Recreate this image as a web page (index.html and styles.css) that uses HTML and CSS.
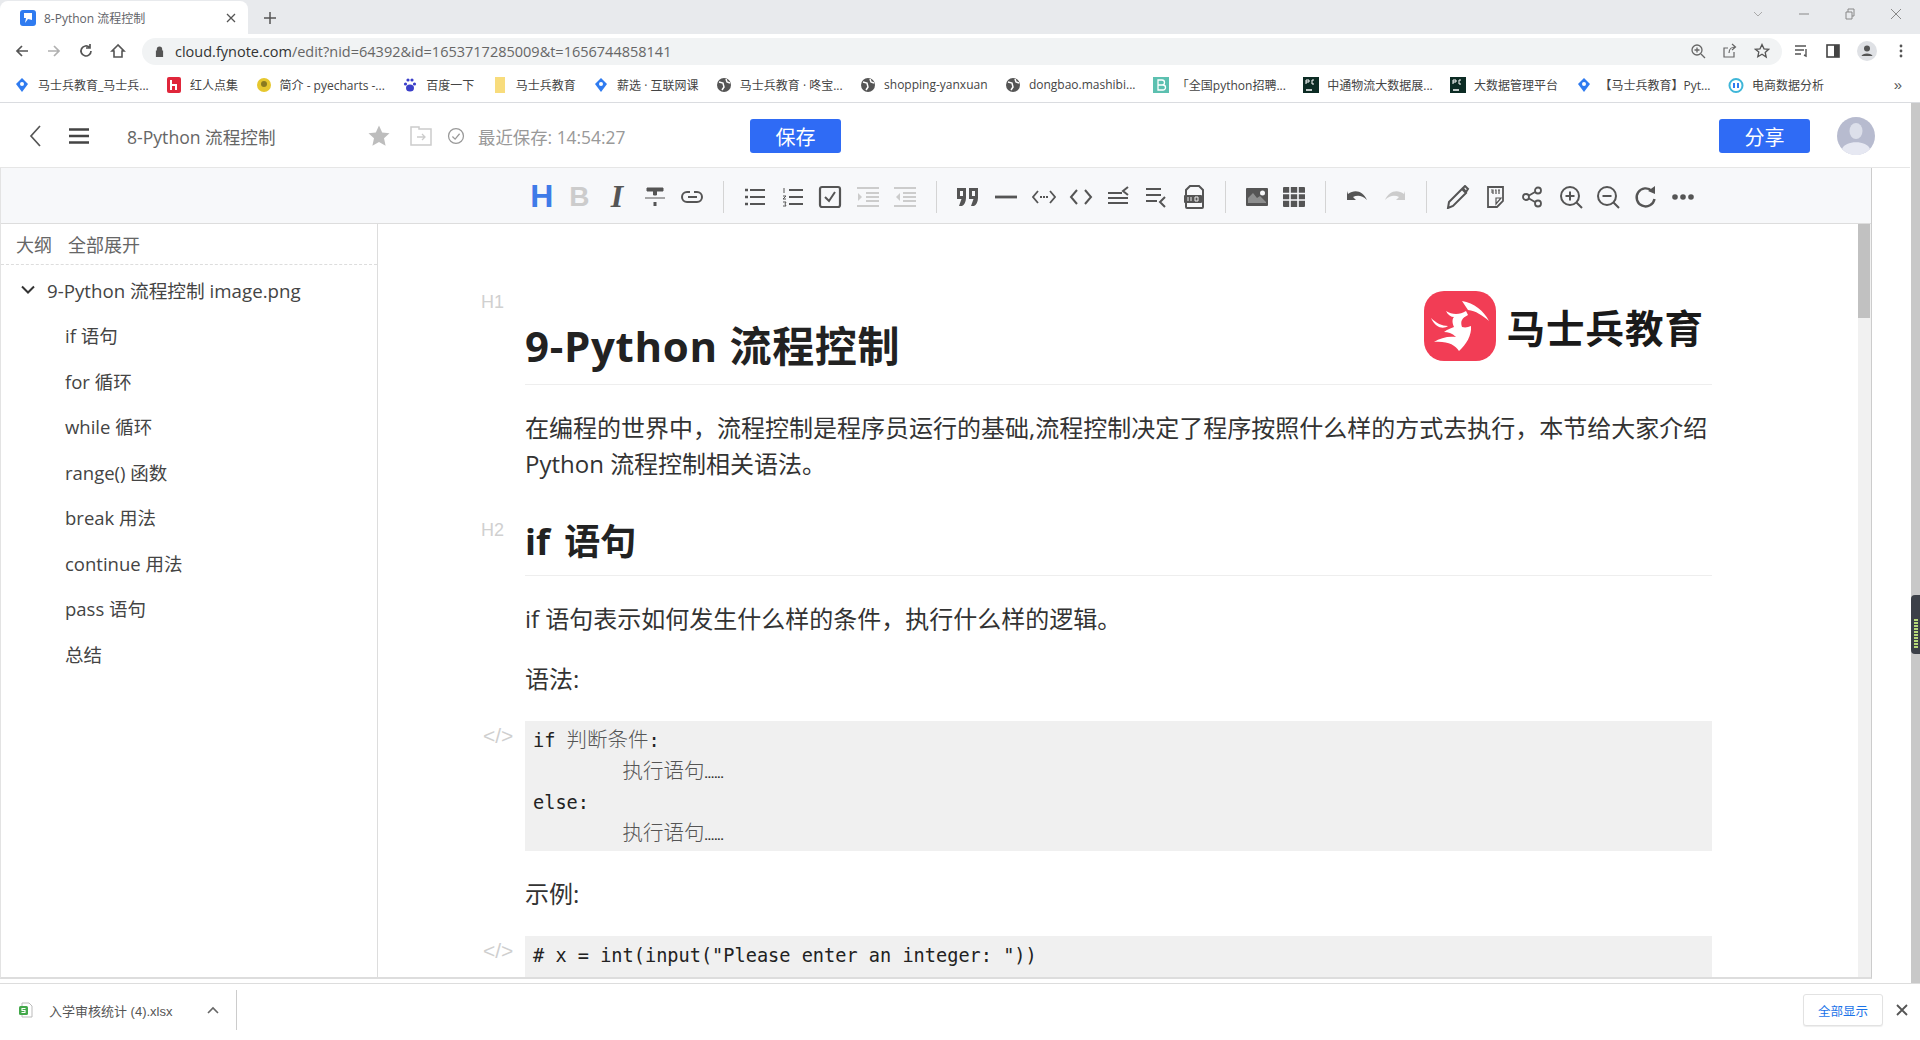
FILE: index.html
```html
<!DOCTYPE html>
<html lang="zh-CN">
<head>
<meta charset="utf-8">
<title>8-Python 流程控制</title>
<link rel="stylesheet" href="styles.css">
</head>
<body>
<div class="screen">
  <div class="tabstrip">
    <div class="tab">
      <svg class="fav" viewBox="0 0 16 16"><rect width="16" height="16" rx="3" fill="#2f7bf0"/><path d="M4 3h8v7l-4-1-3 4 1-5H4z" fill="#fff"/></svg>
      <span class="tab-title">8-Python 流程控制</span>
      <svg class="tab-x" viewBox="0 0 10 10"><path d="M1 1l8 8M9 1l-8 8" stroke="#555" stroke-width="1.3"/></svg>
    </div>
    <svg class="tab-new" viewBox="0 0 12 12"><path d="M6 0v12M0 6h12" stroke="#555" stroke-width="1.5"/></svg>
    <div class="win-btns">
      <svg viewBox="0 0 12 12"><path d="M2 4l4 4 4-4" fill="none" stroke="#aaa"/></svg>
      <svg viewBox="0 0 12 12"><path d="M1 6h10" stroke="#888"/></svg>
      <svg viewBox="0 0 12 12"><path d="M2 4h6v7H2zM4 4V1h6v7H8" fill="none" stroke="#888"/></svg>
      <svg viewBox="0 0 12 12"><path d="M1 1l10 10M11 1L1 11" stroke="#888"/></svg>
    </div>
  </div>
  <div class="navbar">
    <svg class="nav-ic" viewBox="0 0 16 16"><path d="M14 8H3M8 3L3 8l5 5" fill="none" stroke="#555" stroke-width="1.7"/></svg>
    <svg class="nav-ic" viewBox="0 0 16 16"><path d="M2 8h11M8 3l5 5-5 5" fill="none" stroke="#b0b0b0" stroke-width="1.7"/></svg>
    <svg class="nav-ic" viewBox="0 0 16 16"><path d="M13 8a5 5 0 1 1-1.5-3.6M12 1v4H8" fill="none" stroke="#555" stroke-width="1.7"/></svg>
    <svg class="nav-ic" viewBox="0 0 16 16"><path d="M8 2L2 8h2v6h8V8h2z" fill="none" stroke="#555" stroke-width="1.6"/></svg>
    <div class="omnibox">
      <svg class="lock" viewBox="0 0 10 12"><path d="M2 5V3.500a3 3 0 0 1 6 0V5h1v7H1V5z" fill="#555"/></svg>
      <span class="url"><span class="url-host">cloud.fynote.com</span>/edit?nid=64392&amp;id=1653717285009&amp;t=1656744858141</span>
      <svg class="omni-ic" viewBox="0 0 16 16"><circle cx="7" cy="7" r="5" fill="none" stroke="#666" stroke-width="1.3"/><path d="M11 11l4 4M7 4.500v5M4.500 7h5" stroke="#666" stroke-width="1.3"/></svg>
      <svg class="omni-ic" viewBox="0 0 16 16"><path d="M12 9v5H2V5h4M7 10c0-4 3-6 6-6M10 1l3.500 3L10 7" fill="none" stroke="#666" stroke-width="1.2"/></svg>
      <svg class="omni-ic" viewBox="0 0 16 16"><path d="M8 1.500l2 4.300 4.600.5-3.400 3.100 1 4.600L8 11.300l-4.200 2.400 1-4.600L1.400 6.300 6 5.800z" fill="none" stroke="#555" stroke-width="1.3"/></svg>
    </div>
    <div class="nav-right">
      <svg class="nav-ic-s" viewBox="0 0 16 16"><path d="M2 3h11M2 7h9M2 11h6M13 6v7l-2-1" fill="none" stroke="#555" stroke-width="1.4"/></svg>
      <svg class="nav-ic-s" viewBox="0 0 16 16"><rect x="2" y="2" width="12" height="12" fill="none" stroke="#444" stroke-width="1.6"/><rect x="9" y="2" width="5" height="12" fill="#444"/></svg>
      <svg class="nav-avatar" viewBox="0 0 20 20"><circle cx="10" cy="10" r="10" fill="#dfe1e5"/><circle cx="10" cy="7.500" r="3" fill="#555"/><path d="M4.500 15c.5-3.500 10.500-3.500 11 0z" fill="#555"/></svg>
      <svg class="nav-ic-s" viewBox="0 0 16 16"><circle cx="8" cy="3" r="1.400" fill="#555"/><circle cx="8" cy="8" r="1.400" fill="#555"/><circle cx="8" cy="13" r="1.400" fill="#555"/></svg>
    </div>
  </div>
  <div class="bookmarks">
    <a class="bm"><svg viewBox="0 0 16 16"><path d="M8 1l6 6-6 8-6-8z" fill="#2f7bf0"/><circle cx="8" cy="7" r="2" fill="#fff"/></svg>马士兵教育_马士兵...</a>
    <a class="bm"><svg viewBox="0 0 16 16"><rect x="1" width="14" height="16" rx="2" fill="#e0263b"/><path d="M5 3v10M5 8h5v5" fill="none" stroke="#fff" stroke-width="2"/></svg>红人点集</a>
    <a class="bm"><svg viewBox="0 0 16 16"><circle cx="8" cy="8" r="7" fill="#e6c72e"/><circle cx="8" cy="7" r="3" fill="#8a7a20"/></svg>简介 - pyecharts -...</a>
    <a class="bm"><svg viewBox="0 0 16 16"><ellipse cx="8" cy="11" rx="4" ry="3.500" fill="#3b3fc9"/><circle cx="3.500" cy="7" r="1.600" fill="#3b3fc9"/><circle cx="12.500" cy="7" r="1.600" fill="#3b3fc9"/><circle cx="6" cy="3" r="1.600" fill="#3b3fc9"/><circle cx="10" cy="3" r="1.600" fill="#3b3fc9"/></svg>百度一下</a>
    <a class="bm"><svg viewBox="0 0 16 16"><path d="M3 0h10v16H3z" fill="#f8dc7c"/></svg>马士兵教育</a>
    <a class="bm"><svg viewBox="0 0 16 16"><path d="M8 1l6 6-6 8-6-8z" fill="#2f7bf0"/><circle cx="8" cy="7" r="2" fill="#fff"/></svg>薪选 · 互联网课</a>
    <a class="bm"><svg viewBox="0 0 16 16"><circle cx="8" cy="8" r="7" fill="#555"/><path d="M3 5l4 1 1 4-2 3M10 2l1 3 3 1" fill="none" stroke="#fff" stroke-width="1.500"/></svg>马士兵教育 · 咚宝...</a>
    <a class="bm"><svg viewBox="0 0 16 16"><circle cx="8" cy="8" r="7" fill="#555"/><path d="M3 5l4 1 1 4-2 3M10 2l1 3 3 1" fill="none" stroke="#fff" stroke-width="1.500"/></svg>shopping-yanxuan</a>
    <a class="bm"><svg viewBox="0 0 16 16"><circle cx="8" cy="8" r="7" fill="#555"/><path d="M3 5l4 1 1 4-2 3M10 2l1 3 3 1" fill="none" stroke="#fff" stroke-width="1.500"/></svg>dongbao.mashibi...</a>
    <a class="bm"><svg viewBox="0 0 16 16"><rect width="16" height="16" fill="#5cc0b0"/><path d="M5 3h4a2.500 2.500 0 0 1 0 5H5h5a2.500 2.500 0 0 1 0 5H5z" fill="none" stroke="#fff" stroke-width="1.300"/></svg>「全国python招聘...</a>
    <a class="bm"><svg viewBox="0 0 16 16"><rect width="16" height="16" fill="#0c2b24"/><path d="M3 13h6" stroke="#fff" stroke-width="1.500"/><path d="M3 7V3h3v2H3M11 3H9v4h2" fill="none" stroke="#fff"/></svg>中通物流大数据展...</a>
    <a class="bm"><svg viewBox="0 0 16 16"><rect width="16" height="16" fill="#0c2b24"/><path d="M3 13h6" stroke="#fff" stroke-width="1.500"/><path d="M3 7V3h3v2H3M11 3H9v4h2" fill="none" stroke="#fff"/></svg>大数据管理平台</a>
    <a class="bm"><svg viewBox="0 0 16 16"><path d="M8 1l6 6-6 8-6-8z" fill="#2f7bf0"/><circle cx="8" cy="7" r="2" fill="#fff"/></svg>【马士兵教育】Pyt...</a>
    <a class="bm"><svg viewBox="0 0 16 16"><circle cx="8" cy="8.500" r="6.500" fill="none" stroke="#3fb6d8" stroke-width="2"/><path d="M6 6v5M10 6v5" stroke="#2f7bf0" stroke-width="2"/></svg>电商数据分析</a>
    <span class="bm-more">»</span>
  </div>

  <div class="app">
    <div class="app-col">
      <header class="app-header">
        <svg class="hd-back" viewBox="0 0 12 22"><path d="M11 1L2 11l9 10" fill="none" stroke="#555" stroke-width="1.700"/></svg>
        <svg class="hd-menu" viewBox="0 0 20 16"><path d="M0 1.500h20M0 8h20M0 14.500h20" stroke="#444" stroke-width="2.600"/></svg>
        <span class="doc-title">8-Python 流程控制</span>
        <svg class="hd-star" viewBox="0 0 24 24"><path d="M12 1.500l3.200 7 7.300.8-5.500 5 1.600 7.500L12 18l-6.600 3.800L7 14.300l-5.500-5 7.300-.8z" fill="#bdbdbd"/></svg>
        <svg class="hd-folder" viewBox="0 0 22 20"><path d="M1 1h8v2h12v16H1z" fill="none" stroke="#ccc" stroke-width="1.500"/><path d="M7 11h8M12 8l3 3-3 3" fill="none" stroke="#ccc" stroke-width="1.300"/></svg>
        <svg class="hd-check" viewBox="0 0 20 20"><circle cx="10" cy="10" r="8.300" fill="none" stroke="#999" stroke-width="1.400"/><path d="M6 10.500l3 3 5-6" fill="none" stroke="#999" stroke-width="1.400"/></svg>
        <span class="saved">最近保存: 14:54:27</span>
        <button class="btn btn-save">保存</button>
        <button class="btn btn-share">分享</button>
        <svg class="avatar" viewBox="0 0 38 38"><circle cx="19" cy="19" r="19" fill="#b7bbcf"/><ellipse cx="19" cy="14" rx="6.500" ry="8" fill="#dcdfea"/><path d="M5 32c3-9 25-9 28 0a19 19 0 0 1-28 0z" fill="#e6e8f2"/></svg>
      </header>
      <div class="panel">
        <div class="toolbar">
          <span class="tb tb-h">H</span>
          <span class="tb tb-b">B</span>
          <span class="tb tb-i">I</span>
          <span class="tb"><svg viewBox="0 0 24 24"><path d="M4 3h16v3h-6.500v4h-3V6H4zM2 13h20" fill="#555" stroke="#555" stroke-width="1"/><rect x="10.500" y="17" width="3" height="4" fill="#555"/></svg></span>
          <span class="tb"><svg viewBox="0 0 24 24"><path d="M10 7H7a5 5 0 0 0 0 10h10a5 5 0 0 0 0-10h-3" fill="none" stroke="#555" stroke-width="2"/><path d="M8 12h9" stroke="#555" stroke-width="2"/></svg></span>
          <i class="sep"></i>
          <span class="tb"><svg viewBox="0 0 24 24"><path d="M7 5h15M7 12h15M7 19h15" stroke="#555" stroke-width="2.200"/><path d="M2 5h3M2 12h3M2 19h3" stroke="#555" stroke-width="2.600"/></svg></span>
          <span class="tb"><svg viewBox="0 0 24 24"><path d="M8 5h14M8 12h14M8 19h14" stroke="#555" stroke-width="2.200"/><path d="M3 3v5M2 11h3l-3 3h3M2 17h3l-1 2 1 2H2" fill="none" stroke="#555" stroke-width="1"/></svg></span>
          <span class="tb"><svg viewBox="0 0 24 24"><rect x="2" y="2" width="20" height="20" rx="2" fill="none" stroke="#555" stroke-width="2.200"/><path d="M7 12l4 4 6-9" fill="none" stroke="#555" stroke-width="2"/></svg></span>
          <span class="tb"><svg viewBox="0 0 24 24"><path d="M1 3h22M10 8h13M10 12h13M10 16h13M1 21h22" stroke="#ccc" stroke-width="2.200"/><path d="M2 8l4 4-4 4z" fill="#ccc"/></svg></span>
          <span class="tb"><svg viewBox="0 0 24 24"><path d="M1 3h22M10 8h13M10 12h13M10 16h13M1 21h22" stroke="#ccc" stroke-width="2.200"/><path d="M7 8l-4 4 4 4z" fill="#ccc"/></svg></span>
          <i class="sep"></i>
          <span class="tb"><svg viewBox="0 0 24 24"><path fill-rule="evenodd" d="M1 3h9v10c0 4-2 7-4 8H3l2.500-7H1zM4 6v5h3V6zM13 3h9v10c0 4-2 7-4 8h-3l2.500-7H13zM16 6v5h3V6z" fill="#555"/></svg></span>
          <span class="tb"><svg viewBox="0 0 24 24"><path d="M1 12h22" stroke="#555" stroke-width="2.800"/></svg></span>
          <span class="tb"><svg viewBox="0 0 24 24"><path d="M6 6l-5 6 5 6M18 6l5 6-5 6" fill="none" stroke="#555" stroke-width="1.800"/><path d="M8 12h2M11 12h2M14 12h2" stroke="#555" stroke-width="1.800"/></svg></span>
          <span class="tb"><svg viewBox="0 0 24 24"><path d="M8 5l-6 7 6 7M16 5l6 7-6 7" fill="none" stroke="#555" stroke-width="2"/></svg></span>
          <span class="tb"><svg viewBox="0 0 24 24"><path d="M1 8h14M1 13h20M1 18h20M21 2l-5 4 5 4" fill="none" stroke="#555" stroke-width="2"/></svg></span>
          <span class="tb"><svg viewBox="0 0 24 24"><path d="M2 4h15M2 10h15M2 16h11M21 12l-5 5 5 5" fill="none" stroke="#555" stroke-width="2"/></svg></span>
          <span class="tb"><svg viewBox="0 0 24 24"><path d="M8 1h9l4 4v17a1 1 0 0 1-1 1H5a1 1 0 0 1-1-1V5z" fill="none" stroke="#555" stroke-width="2"/><rect x="2" y="10" width="18" height="8" rx="1" fill="#555"/><path d="M6 12v4M9 12v4M13 12v4h3v-4z" fill="none" stroke="#eee"/></svg></span>
          <i class="sep"></i>
          <span class="tb"><svg viewBox="0 0 24 24"><rect x="1" y="3" width="22" height="18" rx="1" fill="#555"/><circle cx="17.500" cy="8" r="2.500" fill="#f7f8fa"/><path d="M3 13l5-5 4 5 3-2 6 6v1H3z" fill="#f7f8fa" opacity=".35"/></svg></span>
          <span class="tb"><svg viewBox="0 0 24 24"><rect x="1" y="2" width="22" height="20" rx="1" fill="#555"/><path d="M8 2v20M16 2v20M1 8.500h22M1 15h22" stroke="#f7f8fa" stroke-width="1.600"/></svg></span>
          <i class="sep"></i>
          <span class="tb"><svg viewBox="0 0 24 24"><path d="M3 9c7-5 15-3 19 6-5-5-10-5-14-3l3 3H2V6z" fill="#555"/></svg></span>
          <span class="tb"><svg viewBox="0 0 24 24"><path d="M21 9C14 4 6 6 2 15c5-5 10-5 14-3l-3 3h9V6z" fill="#ccc"/></svg></span>
          <i class="sep"></i>
          <span class="tb"><svg viewBox="0 0 24 24"><path d="M2 23l1-6L16 4l4 4L7 21zM17 3l2-2 3 3-2 3z" fill="none" stroke="#555" stroke-width="2"/></svg></span>
          <span class="tb"><svg viewBox="0 0 24 24"><path d="M5 2h15v14l-6 6H5z" fill="none" stroke="#555" stroke-width="1.800"/><path d="M8 5h2v4M12 5h1v4M15 5h2M16 5v4M8 7h2M13 13h5l-5 6z" fill="none" stroke="#555" stroke-width="1.200"/></svg></span>
          <span class="tb"><svg viewBox="0 0 24 24"><circle cx="5" cy="12" r="3" fill="none" stroke="#555" stroke-width="1.800"/><circle cx="17" cy="5.500" r="3" fill="none" stroke="#555" stroke-width="1.800"/><circle cx="17" cy="18.500" r="3" fill="none" stroke="#555" stroke-width="1.800"/><path d="M8 10.500l6-3.500M8 13.500l6 3.500" stroke="#555" stroke-width="1.800"/></svg></span>
          <span class="tb"><svg viewBox="0 0 24 24"><circle cx="11" cy="11" r="9" fill="none" stroke="#555" stroke-width="2"/><path d="M17.500 17.500l5.500 5.500M11 6.500v9M6.500 11h9" stroke="#555" stroke-width="2"/></svg></span>
          <span class="tb"><svg viewBox="0 0 24 24"><circle cx="11" cy="11" r="9" fill="none" stroke="#555" stroke-width="2"/><path d="M17.500 17.500l5.500 5.500M6.500 11h9" stroke="#555" stroke-width="2"/></svg></span>
          <span class="tb"><svg viewBox="0 0 24 24"><path d="M18 6a9 9 0 1 0 2.500 8" fill="none" stroke="#555" stroke-width="2.400"/><path d="M14 6l7-5v8z" fill="#555"/></svg></span>
          <span class="tb"><svg viewBox="0 0 24 24"><circle cx="4" cy="12" r="2.800" fill="#555"/><circle cx="12" cy="12" r="2.800" fill="#555"/><circle cx="20" cy="12" r="2.800" fill="#555"/></svg></span>
        </div>
        <div class="main">
          <aside class="sidebar">
            <div class="side-head"><span>大纲</span><span>全部展开</span></div>
            <div class="tree-root"><svg viewBox="0 0 14 10"><path d="M1 1.500l6 6 6-6" fill="none" stroke="#333" stroke-width="2"/></svg>9-Python 流程控制 image.png</div>
            <ul class="tree">
              <li>if 语句</li>
              <li>for 循环</li>
              <li>while 循环</li>
              <li>range() 函数</li>
              <li>break 用法</li>
              <li>continue 用法</li>
              <li>pass 语句</li>
              <li>总结</li>
            </ul>
          </aside>
          <div class="doc">
            <div class="row">
              <span class="gutter">H1</span>
              <div class="h1-box">
                <h1>9-Python 流程控制</h1>
                <div class="logo">
                  <svg viewBox="0 0 72 70"><rect width="72" height="70" rx="20" fill="#f23d55"/><path d="M38 10C50 12 60 20 65 30 58 24 52 20 44 19 42 16 40 13 38 10ZM22 20C28 24 36 24 42 20L44 24C38 27 36 30 38 36 42 37 44 36 47 35 48 44 42 54 35 60 31 54 24 50 10 51 16 47 24 45 32 46 28 42 24 41 20 41 24 38 28 37 30 36 28 32 28 28 30 26 27 26 24 24 22 20ZM7 27C12 32 18 35 24 35 20 38 12 38 7 27Z" fill="#fff"/></svg>
                  <span>马士兵教育</span>
                </div>
              </div>
            </div>
            <div class="row r-p1"><span class="gutter"></span><p>在编程的世界中，流程控制是程序员运行的基础,流程控制决定了程序按照什么样的方式去执行，本节给大家介绍Python 流程控制相关语法。</p></div>
            <div class="row r-h2">
              <span class="gutter">H2</span>
              <div class="h2-box"><h2>if 语句</h2></div>
            </div>
            <div class="row r-p2"><span class="gutter"></span><p>if 语句表示如何发生什么样的条件，执行什么样的逻辑。</p></div>
            <div class="row r-p3"><span class="gutter"></span><p>语法:</p></div>
            <div class="row r-code">
              <span class="gutter code-mark">&lt;/&gt;</span>
              <pre class="code">if <span class="cn">判断条件</span>:
        <span class="cn">执行语句</span><span class="dots">......</span>
else:
        <span class="cn">执行语句</span><span class="dots">......</span></pre>
            </div>
            <div class="row r-p4"><span class="gutter"></span><p>示例:</p></div>
            <div class="row r-code">
              <span class="gutter code-mark">&lt;/&gt;</span>
              <pre class="code">
# x = int(input("Please enter an integer: "))</pre>
            </div>
          </div>
          <div class="inner-scroll"><div class="inner-thumb"></div></div>
        </div>
      </div>
    </div>
    <div class="outer-scroll"><div class="side-widget"><i></i></div></div>
  </div>

  <footer class="downloads">
    <svg class="dl-icon" viewBox="0 0 16 16"><path d="M4 1h7l3 3v11H4z" fill="#fff" stroke="#bbb"/><rect x="1" y="4" width="9" height="9" rx="1.500" fill="#43a84a"/><path d="M7.500 6.500H4v2h3v2H3.500" fill="none" stroke="#fff" stroke-width="1.100"/></svg>
    <span class="dl-name">入学审核统计 (4).xlsx</span>
    <svg class="dl-caret" viewBox="0 0 12 8"><path d="M1 7l5-5 5 5" fill="none" stroke="#666" stroke-width="1.600"/></svg>
    <i class="dl-sep"></i>
    <button class="dl-all">全部显示</button>
    <svg class="dl-x" viewBox="0 0 12 12"><path d="M1 1l10 10M11 1L1 11" stroke="#555" stroke-width="1.800"/></svg>
  </footer>
</div>
</body>
</html>
```
FILE: styles.css
```css
* { box-sizing: border-box; }
html, body { margin: 0; padding: 0; height: 100%; overflow: hidden; background: #fff; }
body { font-family: "Open Sans", "Noto Sans CJK SC", sans-serif; color: #333; }
.screen { width: 1920px; height: 1040px; display: flex; flex-direction: column; overflow: hidden; }

/* browser chrome */
.tabstrip { height: 34px; background: #e8eaed; display: flex; align-items: flex-end; flex: none; }
.tab { width: 248px; height: 33px; background: #fff; border-radius: 8px 8px 0 0; display: flex; align-items: center; padding: 0 12px 0 20px; }
.fav { width: 16px; height: 16px; flex: none; }
.tab-title { font: 12px "Open Sans", "Noto Sans CJK SC", sans-serif; color: #5f6368; margin-left: 8px; flex: 1; }
.tab-x { width: 10px; height: 10px; }
.tab-new { width: 12px; height: 12px; margin: 0 0 10px 16px; }
.win-btns { margin-left: auto; display: flex; gap: 34px; padding: 0 18px 6px 0; align-self: center; }
.win-btns svg { width: 12px; height: 12px; }
.navbar { height: 34px; flex: none; display: flex; align-items: center; padding-left: 14px; background: #fff; }
.nav-ic { width: 16px; height: 16px; margin-right: 16px; }
.omnibox { width: 1640px; margin-left: 0; height: 27px; background: #f1f3f4; border-radius: 14px; display: flex; align-items: center; padding: 0 12px; }
.lock { width: 9px; height: 11px; margin-left: 1px; }
.url { font: 14.500px "Open Sans", sans-serif; color: #666; margin-left: 11px; flex: 1; white-space: nowrap; }
.url-host { color: #333; }
.omni-ic { width: 16px; height: 16px; margin-left: 16px; }
.nav-right { display: flex; align-items: center; gap: 16px; margin-left: 11px; }
.nav-ic-s { width: 16px; height: 16px; }
.nav-avatar { width: 20px; height: 20px; }
.bookmarks { height: 35px; flex: none; display: flex; align-items: center; padding: 0 0 1px 14px; gap: 17.400px; border-bottom: 1px solid #dadce0; background: #fff; position: relative; white-space: nowrap; }
.bm { display: flex; align-items: center; gap: 8px; font: 12px "Open Sans", "Noto Sans CJK SC", sans-serif; color: #444; }
.bm svg { width: 16px; height: 16px; flex: none; }
.bm-more { margin-left: auto; padding-right: 18px; font: 15px "Liberation Sans", sans-serif; color: #555; }

/* app */
.app { flex: 1; display: flex; min-height: 0; }
.app-col { flex: 1; min-width: 0; display: flex; flex-direction: column; padding-bottom: 4px; }
.outer-scroll { width: 9px; background: #c8c8c8; margin-left: 1px; flex: none; display: flex; flex-direction: column; padding-top: 492px; }
.side-widget { width: 9px; height: 59px; background: #3c4048; border-radius: 4px 0 0 4px; padding: 24px 2px 6px 3px; }
.side-widget i { display: block; height: 100%; width: 4px; background: repeating-linear-gradient(#b8d97a 0 2px, #3c4048 2px 3px); }
.app-header { height: 65px; flex: none; display: flex; align-items: center; padding-top: 2px; border-bottom: 1px solid #e6e6e6; position: relative; }
.hd-back { width: 12px; height: 22px; margin-left: 29px; }
.hd-menu { width: 20px; height: 16px; margin-left: 28px; }
.doc-title { font-size: 17.600px; color: #666; margin-left: 38px; width: 236px; white-space: nowrap; }
.hd-star { width: 24px; height: 24px; margin-left: 4px; }
.hd-folder { width: 22px; height: 20px; margin-left: 19px; }
.hd-check { width: 18px; height: 18px; margin-left: 15px; }
.saved { font-size: 17.400px; color: #999; margin-left: 13px; width: 272px; white-space: nowrap; }
.btn { border: 0; background: #2f6bf5; color: #fff; height: 34px; border-radius: 3px; font: 20px "Noto Sans CJK SC", sans-serif; padding: 0; }
.btn-save { width: 91px; }
.btn-share { width: 91px; margin-left: auto; }
.avatar { width: 38px; height: 38px; margin: 0 35px 0 27px; }

.panel { flex: 1; min-height: 0; width: 1872px; display: flex; flex-direction: column; border-left: 1px solid #e3e3e3; border-right: 1px solid #ccc; border-bottom: 2px solid #ddd; }
.toolbar { height: 56px; flex: none; background: #f7f8fa; border-bottom: 1px solid #ddd; display: flex; align-items: center; padding: 2px 0 0 522px; }
.tb { width: 37.600px; height: 32px; display: flex; align-items: center; justify-content: center; flex: none; line-height: 32px; }
.tb svg { width: 24px; height: 24px; }
.tb-h { font: 700 32px "Liberation Sans", sans-serif; color: #3f7be8; }
.tb-b { font: 700 28px "Liberation Sans", sans-serif; color: #ccc; }
.tb-i { font: italic 700 32px "Liberation Serif", serif; color: #555; }
.sep { width: 25.300px; flex: none; height: 32px; position: relative; display: flex; justify-content: center; }
.sep::before { content: ""; width: 1px; background: #d4d4d4; }

.main { flex: 1; display: flex; min-height: 0; overflow: hidden; }
.sidebar { width: 377px; flex: none; border-right: 1px solid #ddd; background: #fff; }
.side-head { height: 41px; display: flex; gap: 16px; align-items: center; padding: 0 15px; font-size: 18px; color: #666; border-bottom: 1px dashed #ddd; }
.tree-root { height: 46px; padding-top: 3px; display: flex; align-items: center; gap: 12px; padding-left: 20px; font-size: 18.700px; color: #444; white-space: nowrap; }
.tree-root svg { width: 14px; height: 10px; }
.tree { list-style: none; margin: 0; padding: 2px 0 0 64px; font-size: 18.500px; color: #444; }
.tree li { height: 45.500px; line-height: 45.500px; white-space: nowrap; }

.doc { flex: 1; min-width: 0; padding: 64px 146px 0 103px; overflow: hidden; font-family: "Open Sans", "Noto Sans CJK SC", sans-serif; }
.row { display: flex; }
.gutter { width: 44px; flex: none; font-size: 18px; color: #d0d0d0; line-height: 24px; padding-top: 2px; font-family: "Liberation Sans", sans-serif; }
.code-mark { font-size: 21px; color: #cfcfcf; padding: 3px 0 0 2px; }
.h1-box { flex: 1; height: 97px; display: flex; justify-content: space-between; border-bottom: 1px solid #eee; }
h1 { margin: 28px 0 0; font-size: 42px; line-height: 60px; font-weight: 700; letter-spacing: .7px; color: #222; white-space: nowrap; }
.logo { display: flex; align-items: center; gap: 10px; height: 70px; margin: 3px 8px 0 0; }
.logo svg { width: 72px; height: 70px; }
.logo span { font: 700 38.500px "Noto Sans CJK SC", sans-serif; letter-spacing: 1px; color: #1a1a1a; white-space: nowrap; }
p { margin: 0; flex: 1; font-size: 24px; line-height: 36px; color: #333; }
.r-p1 { margin-top: 25px; }
.r-h2 { margin-top: 34px; }
.h2-box { flex: 1; height: 60px; border-bottom: 1px solid #eee; }
h2 { margin: 0; font-size: 36px; line-height: 52px; font-weight: 700; word-spacing: 5px; color: #222; }
.r-p2 { margin-top: 25px; }
.r-p3 { margin-top: 24px; }
.r-code { margin-top: 24px; }
.r-p4 { margin-top: 25px; }
.code { margin: 0; flex: 1; height: 130px; background: #f0f0f0; padding: 4px 8px 2px; font: 18.600px/31px "DejaVu Sans Mono", monospace; color: #222; }
.code .cn { font: 300 20.500px/0 "Noto Sans CJK SC", sans-serif; color: #555; }
.code .dots { font: 700 11.500px/0 "Liberation Sans", sans-serif; color: #333; }
.inner-scroll { width: 13px; flex: none; background: #f1f1f1; }
.inner-thumb { height: 94px; width: 12px; background: #c1c1c1; }

.downloads { height: 57px; flex: none; border-top: 1px solid #ddd; display: flex; align-items: center; padding-bottom: 4px; background: #fff; }
.dl-icon { width: 16px; height: 16px; margin-left: 18px; }
.dl-name { font: 13px "Liberation Sans", "Noto Sans CJK SC", sans-serif; color: #555; margin-left: 15px; width: 158px; white-space: nowrap; }
.dl-caret { width: 12px; height: 8px; }
.dl-sep { width: 1px; height: 40px; background: #ccc; margin-left: 17px; }
.dl-all { margin-left: auto; width: 80px; height: 32px; background: #fff; border: 1px solid #e2e2e2; border-radius: 3px; color: #1a73e8; font: 12.500px "Noto Sans CJK SC", sans-serif; padding: 0; box-shadow: 0 1px 1px #eee; }
.dl-x { width: 12px; height: 12px; margin: 0 12px 0 13px; }
```
